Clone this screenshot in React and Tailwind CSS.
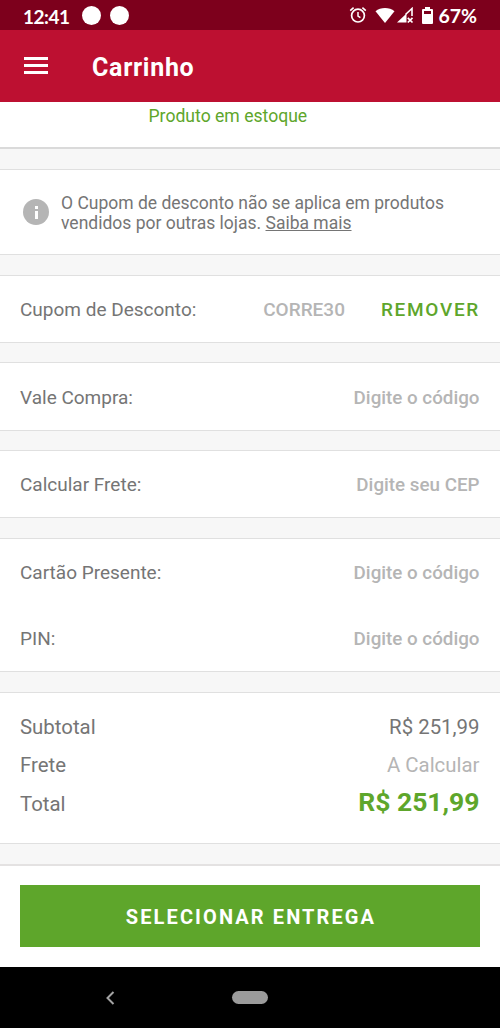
import React from 'react';

const StatusBar = () => {
  return (
    <div className="flex h-[30px] shrink-0 items-center bg-[#7d001c] pl-[23px] pr-[23px] text-white">
      <span className="w-[59px] pt-[2px] font-[Lato,sans-serif] text-[19px] font-bold leading-none tracking-[-0.5px]">12:41</span>
      <div className="flex gap-[9px]">
        <div className="h-[19px] w-[19px] rounded-full bg-white" />
        <div className="h-[19px] w-[19px] rounded-full bg-white" />
      </div>
      <div className="ml-auto flex items-center">
        <svg className="mr-[8px]" width="18" height="18" viewBox="0 0 18 18" fill="none" stroke="currentColor">
          <circle cx="9" cy="9.6" r="6.4" strokeWidth="1.7" />
          <path d="M9 6v4l2.4 1.6" strokeWidth="1.5" />
          <path d="M1.2 4.6 4.6 1.6M16.8 4.6 13.4 1.6" strokeWidth="1.6" />
        </svg>
        <svg className="mr-[2px]" width="20" height="17" viewBox="0 0 20 17" fill="currentColor">
          <path d="M0.5 4.2C5.6-.1 14.4-.1 19.5 4.2L10 16z" />
        </svg>
        <svg className="mr-[8px]" width="17" height="17" viewBox="0 0 17 17">
          <path d="M0 15.5 9.5 6.5V15.5z" fill="currentColor" />
          <path d="M8.5 7.5 15 1.500V9" fill="none" stroke="currentColor" strokeWidth="1.6" />
          <path d="m10.800 10.800 4.700 4.700m0-4.700-4.700 4.700" stroke="currentColor" strokeWidth="1.7" />
        </svg>
        <svg className="mr-[5px]" width="11" height="17" viewBox="0 0 11 17" fill="currentColor" fillRule="evenodd">
          <path d="M3 0h5v2h2a1 1 0 0 1 1 1v13a1 1 0 0 1-1 1H1a1 1 0 0 1-1-1V3a1 1 0 0 1 1-1h2zM2 4v3h7V4z" />
        </svg>
        <span className="pt-[2px] font-[Lato,sans-serif] text-[19.5px] font-bold leading-none">67%</span>
      </div>
    </div>
  );
};

const Header = () => {
  return (
    <div className="flex h-[72px] shrink-0 items-center bg-[#bd1031] pl-[24px] text-white">
      <div className="mb-px flex w-[68px] flex-col gap-[4px]">
        <div className="h-[3px] w-[24px] bg-white" />
        <div className="h-[3px] w-[24px] bg-white" />
        <div className="h-[3px] w-[24px] bg-white" />
      </div>
      <h1 className="pt-[3px] text-[25px] font-bold tracking-[0.7px]">Carrinho</h1>
    </div>
  );
};

const Field = ({ label, placeholder, height }) => {
  return (
    <div className={`flex items-center justify-between pt-[2px] ${height}`}>
      <span className="text-[#757575]">{label}</span>
      <span className="pr-[0.5px] text-[18.8px] font-medium text-[#b5b5b5]">{placeholder}</span>
    </div>
  );
};

const App = () => {
  return (
    <div className="flex h-[1028px] w-[500px] flex-col overflow-hidden bg-[#f7f7f7] font-[Roboto,sans-serif] text-[19px]">
      <StatusBar />
      <Header />
      <div className="h-[47px] shrink-0 border-b-2 border-[#dadada] bg-white pl-[148.5px] pt-px text-[17.6px] leading-[27px] text-[#5ea62b]">
        Produto em estoque
      </div>

      <div className="mt-[20px] flex h-[86px] shrink-0 items-center border-y border-[#e0e0e0] bg-white pl-[23px]">
        <div className="mr-[12px] flex h-[26px] w-[26px] shrink-0 flex-col items-center justify-center gap-[2px] rounded-full bg-[#b5b5b5]">
          <div className="h-[3px] w-[3px] bg-white" />
          <div className="h-[8px] w-[3px] bg-white" />
        </div>
        <p className="pt-[2px] text-[17.5px] leading-[20.5px] text-[#757575]">
          O Cupom de desconto não se aplica em produtos
          <br />
          vendidos por outras lojas. <span className="underline">Saiba mais</span>
        </p>
      </div>

      <div className="mt-[20px] flex h-[68px] shrink-0 items-center border-y border-[#e0e0e0] bg-white px-[20px] pt-[2px]">
        <span className="text-[#757575]">Cupom de Desconto:</span>
        <span className="ml-auto mr-[36px] font-medium text-[#b5b5b5]">CORRE30</span>
        <span className="font-medium tracking-[1.7px] text-[#5ea62b]">REMOVER</span>
      </div>

      <div className="mt-[19px] shrink-0 border-y border-[#e0e0e0] bg-white px-[20px] pt-px">
        <Field label="Vale Compra:" placeholder="Digite o código" height="h-[66px]" />
      </div>

      <div className="mt-[19px] shrink-0 border-y border-[#e0e0e0] bg-white px-[20px]">
        <Field label="Calcular Frete:" placeholder="Digite seu CEP" height="h-[66px]" />
      </div>

      <div className="mt-[20px] shrink-0 border-y border-[#e0e0e0] bg-white px-[20px]">
        <Field label="Cartão Presente:" placeholder="Digite o código" height="h-[66px]" />
        <Field label="PIN:" placeholder="Digite o código" height="h-[66px]" />
      </div>

      <div className="mt-[20px] h-[152px] shrink-0 border-y border-[#e0e0e0] bg-white pl-[20px] pr-[20.5px] pt-[15px] text-[20.4px] text-[#757575]">
        <div className="flex h-[38px] items-center justify-between">
          <span>Subtotal</span>
          <span>R$ 251,99</span>
        </div>
        <div className="flex h-[38px] items-center justify-between">
          <span>Frete</span>
          <span className="text-[#b5b5b5]">A Calcular</span>
        </div>
        <div className="flex h-[38px] items-center justify-between">
          <span className="pt-[2px]">Total</span>
          <span className="pb-[3px] text-[26.5px] font-bold text-[#5ea62b]">R$ 251,99</span>
        </div>
      </div>

      <div className="mt-[20px] h-[103px] shrink-0 border-t-2 border-[#e4e2e2] bg-white px-[20px] pt-[19px]">
        <button className="flex h-[62px] w-full items-center justify-center bg-[#5ea62b] pl-[2px] pt-[2px] text-[20px] font-bold tracking-[2.1px] text-white">
          SELECIONAR ENTREGA
        </button>
      </div>

      <div className="grid flex-1 grid-cols-[232px_36px_1fr] items-center bg-black">
        <svg className="ml-[106px]" width="9" height="14" viewBox="0 0 9 14" fill="none" stroke="#a3a3a3" strokeWidth="2">
          <path d="M7.5 1 1.5 7l6 6" />
        </svg>
        <div className="h-[13px] rounded-full bg-[#9b9b9b]" />
      </div>
    </div>
  );
};

export default App;
